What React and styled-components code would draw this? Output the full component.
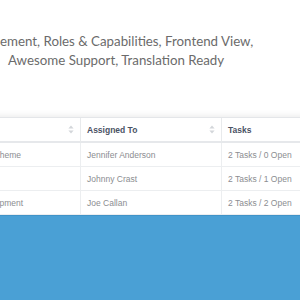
import React from 'react';
import styled, { createGlobalStyle } from 'styled-components';

const rows = [
  { project: 'Child Theme', assignee: 'Jennifer Anderson', tasks: '2 Tasks / 0 Open' },
  { project: 'SEO', assignee: 'Johnny Crast', tasks: '2 Tasks / 1 Open' },
  { project: 'Development', assignee: 'Joe Callan', tasks: '2 Tasks / 2 Open' },
];

const SortIcon = () => (
  <svg width="6" height="9" viewBox="0 0 6 9">
    <path d="M3 0.5 L5.6 3.6 L0.4 3.6 Z" fill="#d3d6da" />
    <path d="M3 8.5 L5.6 5.4 L0.4 5.4 Z" fill="#d3d6da" />
  </svg>
);

const App = () => (
  <>
    <GlobalStyle />
    <Page>
      <Features>
        <FeatureLine>ement, Roles &amp; Capabilities, Frontend View,</FeatureLine>
        <FeatureLine indent={8}>Awesome Support, Translation Ready</FeatureLine>
      </Features>

      <TableWrap>
        <Table>
          <HeadCell active>
            Name
            <SortIcon />
          </HeadCell>
          <HeadCell>
            Assigned To
            <SortIcon />
          </HeadCell>
          <HeadCell last>Tasks</HeadCell>

          {rows.map((row) => (
            <React.Fragment key={row.assignee}>
              <Cell>{row.project}</Cell>
              <Cell>{row.assignee}</Cell>
              <Cell last>{row.tasks}</Cell>
            </React.Fragment>
          ))}
        </Table>
      </TableWrap>

      <Footer />
    </Page>
  </>
);

const GlobalStyle = createGlobalStyle`
  html, body {
    margin: 0;
    padding: 0;
    background: #ffffff;
  }
`;

const Page = styled.div`
  width: 300px;
  height: 300px;
  overflow: hidden;
  display: flex;
  flex-direction: column;
  background: #ffffff;
`;

const Features = styled.div`
  padding-top: 32px;
  height: 117px;
  flex-shrink: 0;
  box-sizing: border-box;
`;

const FeatureLine = styled.div`
  font-family: Lato, "Open Sans", sans-serif;
  font-size: 13.3px;
  line-height: 19px;
  color: #6b6b6b;
  white-space: nowrap;
  padding-left: ${(props) => props.indent || 0}px;
`;

const TableWrap = styled.div`
  flex-shrink: 0;
  margin-left: -33px;
  width: 420px;
  background: #ffffff;
  box-shadow: 0 -2px 6px rgba(0, 0, 0, 0.07);
  border-top: 1px solid #e4e6e9;
`;

const Table = styled.div`
  display: grid;
  grid-template-columns: 114px 141px 1fr;
  grid-template-rows: 25px repeat(3, 24px);
`;

const HeadCell = styled.div`
  display: flex;
  align-items: center;
  justify-content: space-between;
  padding: 0 6px;
  font-family: "Liberation Sans", Arial, sans-serif;
  font-size: 8.5px;
  font-weight: bold;
  color: ${(props) => (props.active ? '#4b8fcf' : '#4a5365')};
  border-right: ${(props) => (props.last ? 'none' : '1px solid #e8eaec')};
  border-bottom: 2px solid #e6e8eb;
  box-sizing: border-box;
`;

const Cell = styled.div`
  display: flex;
  align-items: center;
  padding: 0 6px;
  font-family: "Liberation Sans", Arial, sans-serif;
  font-size: 8.5px;
  color: #8b8d91;
  white-space: nowrap;
  border-right: ${(props) => (props.last ? 'none' : '1px solid #eceef0')};
  border-bottom: 1px solid #eceef0;
  box-sizing: border-box;
`;

const Footer = styled.div`
  flex: 1;
  background: #4aa0d5;
  border-top: 1px solid #4093c8;
`;

export default App;
